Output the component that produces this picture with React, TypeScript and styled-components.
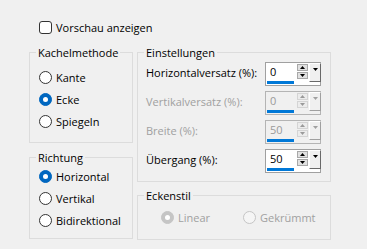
import React from 'react';
import styled, { createGlobalStyle } from 'styled-components';

const GlobalStyle = createGlobalStyle`
  html, body {
    margin: 0;
    padding: 0;
    background: #f0f0f0;
  }
  body {
    font-family: 'Open Sans', 'Noto Sans', sans-serif;
    font-size: 11px;
    line-height: 15px;
    color: #000;
  }
`;

const Dialog = styled.div`
  width: 367px;
  height: 249px;
  box-sizing: border-box;
  padding: 20px 0 0 29px;
  background: #f0f0f0;
`;

const CheckRow = styled.label`
  display: flex;
  align-items: center;
  gap: 4px;
  height: 15px;
  margin: 0 0 10px 10px;
`;

const CheckBox = styled.span`
  width: 13px;
  height: 13px;
  box-sizing: border-box;
  border: 1px solid #333;
  border-radius: 3px;
  background: #fff;
`;

const Columns = styled.div`
  display: grid;
  grid-template-columns: 104px 194px;
  column-gap: 4px;
  align-items: start;
`;

const Column = styled.div<{ $gap: number }>`
  display: flex;
  flex-direction: column;
  gap: ${(p) => p.$gap}px;
`;

const Group = styled.fieldset`
  margin: 0;
  padding: 0;
  min-width: 0;
  border: 1px solid #dcdcdc;
`;

const Legend = styled.legend`
  margin-left: 6px;
  padding: 0 2px;
  line-height: 15px;
`;

const GroupBody = styled.div<{ $pad: string }>`
  padding: ${(p) => p.$pad};
`;

const RadioRow = styled.label<{ $disabled?: boolean }>`
  display: flex;
  align-items: center;
  gap: 4px;
  height: 22px;
  color: ${(p) => (p.$disabled ? '#a0a0a0' : '#000')};
`;

const RadioInline = styled.div`
  display: grid;
  grid-template-columns: 82px auto;
`;

const RadioDot = styled.span<{ $checked?: boolean; $disabled?: boolean }>`
  width: 13px;
  height: 13px;
  box-sizing: border-box;
  border-radius: 50%;
  display: grid;
  place-items: center;
  border: 1px solid
    ${(p) => (p.$disabled ? '#c5c5c5' : p.$checked ? '#0067c0' : '#333')};
  background: ${(p) =>
    p.$checked ? (p.$disabled ? '#c5c5c5' : '#0067c0') : p.$disabled ? '#f5f5f5' : '#fff'};
  &::after {
    content: '';
    display: ${(p) => (p.$checked ? 'block' : 'none')};
    width: 5px;
    height: 5px;
    border-radius: 50%;
    background: #fff;
  }
`;

const SpinList = styled.div`
  display: flex;
  flex-direction: column;
  gap: 5px;
`;

const SpinRow = styled.div<{ $disabled?: boolean }>`
  display: flex;
  align-items: center;
  justify-content: space-between;
  height: 24px;
  color: ${(p) => (p.$disabled ? '#a0a0a0' : '#000')};
`;

const SpinLabel = styled.span`
  padding-bottom: 3px;
`;

const SpinBox = styled.div<{ $disabled?: boolean }>`
  width: 56px;
  height: 24px;
  box-sizing: border-box;
  border: 1px solid ${(p) => (p.$disabled ? '#b4b4b4' : '#a0a0a0')};
  background: ${(p) => (p.$disabled ? '#f0f0f0' : '#fff')};
  display: grid;
  grid-template-columns: 30px 11px 12px;
  column-gap: 1px;
  align-items: start;
`;

const Edit = styled.div<{ $disabled?: boolean }>`
  height: 21px;
  display: flex;
  flex-direction: column;
  justify-content: space-between;
  padding-top: 1px;
  box-sizing: border-box;
  background: ${(p) => (p.$disabled ? '#f0f0f0' : '#fff')};
  color: ${(p) => (p.$disabled ? '#9a9a9a' : '#000')};
`;

const EditText = styled.span`
  padding-left: 4px;
`;

const EditBar = styled.span`
  height: 3px;
  margin: 0 2px 0 1px;
  background: #0078d7;
`;

const Stepper = styled.div`
  display: flex;
  flex-direction: column;
  gap: 1px;
  padding-top: 1px;
`;

const StepButton = styled.span<{ $disabled?: boolean }>`
  height: 7px;
  box-sizing: border-box;
  border: 1px solid ${(p) => (p.$disabled ? '#d4d4d4' : '#a8a8a8')};
  background: ${(p) => (p.$disabled ? '#ececec' : '#e1e1e1')};
  display: grid;
  place-items: center;
`;

const DropButton = styled.span<{ $disabled?: boolean }>`
  height: 19px;
  box-sizing: border-box;
  background: #f0f0f0;
  border-style: solid;
  border-width: 1px;
  border-color: #fff ${(p) => (p.$disabled ? '#a0a0a0' : '#696969')}
    ${(p) => (p.$disabled ? '#a0a0a0' : '#696969')} #fff;
  display: flex;
  justify-content: center;
  padding-top: 4px;
`;

const Arrow = ({ up, color }: { up?: boolean; color: string }) => (
  <svg width="5" height="3" viewBox="0 0 5 3" style={{ display: 'block' }}>
    <path d={up ? 'M0 3 L2.5 0 L5 3 Z' : 'M0 0 L5 0 L2.5 3 Z'} fill={color} />
  </svg>
);

type SpinProps = { label: string; value: string; disabled?: boolean };

const Spin = ({ label, value, disabled }: SpinProps) => {
  const arrow = disabled ? '#9a9a9a' : '#000';
  return (
    <SpinRow $disabled={disabled}>
      <SpinLabel>{label}</SpinLabel>
      <SpinBox $disabled={disabled}>
        <Edit $disabled={disabled}>
          <EditText>{value}</EditText>
          <EditBar />
        </Edit>
        <Stepper>
          <StepButton $disabled={disabled}>
            <Arrow up color={arrow} />
          </StepButton>
          <StepButton $disabled={disabled}>
            <Arrow color={arrow} />
          </StepButton>
        </Stepper>
        <DropButton $disabled={disabled}>
          <Arrow color={disabled ? '#a0a0a0' : '#000'} />
        </DropButton>
      </SpinBox>
    </SpinRow>
  );
};

type RadioProps = { label: string; checked?: boolean; disabled?: boolean };

const Radio = ({ label, checked, disabled }: RadioProps) => (
  <RadioRow $disabled={disabled}>
    <RadioDot $checked={checked} $disabled={disabled} />
    <span>{label}</span>
  </RadioRow>
);

export default function App() {
  return (
    <Dialog>
      <GlobalStyle />
      <CheckRow>
        <CheckBox />
        <span>Vorschau anzeigen</span>
      </CheckRow>
      <Columns>
        <Column $gap={7}>
          <Group>
            <Legend>Kachelmethode</Legend>
            <GroupBody $pad="6px 0 10px 9px">
              <Radio label="Kante" />
              <Radio label="Ecke" checked />
              <Radio label="Spiegeln" />
            </GroupBody>
          </Group>
          <Group>
            <Legend>Richtung</Legend>
            <GroupBody $pad="0 0 7px 9px">
              <Radio label="Horizontal" checked />
              <Radio label="Vertikal" />
              <Radio label="Bidirektional" />
            </GroupBody>
          </Group>
        </Column>
        <Column $gap={6}>
          <Group>
            <Legend>Einstellungen</Legend>
            <GroupBody $pad="2px 9px 8px 8px">
              <SpinList>
                <Spin label="Horizontalversatz (%):" value="0" />
                <Spin label="Vertikalversatz (%):" value="0" disabled />
                <Spin label="Breite (%):" value="50" disabled />
                <Spin label="Übergang (%):" value="50" />
              </SpinList>
            </GroupBody>
          </Group>
          <Group>
            <Legend>Eckenstil</Legend>
            <GroupBody $pad="3px 0 11px 23px">
              <RadioInline>
                <Radio label="Linear" checked disabled />
                <Radio label="Gekrümmt" disabled />
              </RadioInline>
            </GroupBody>
          </Group>
        </Column>
      </Columns>
    </Dialog>
  );
}
